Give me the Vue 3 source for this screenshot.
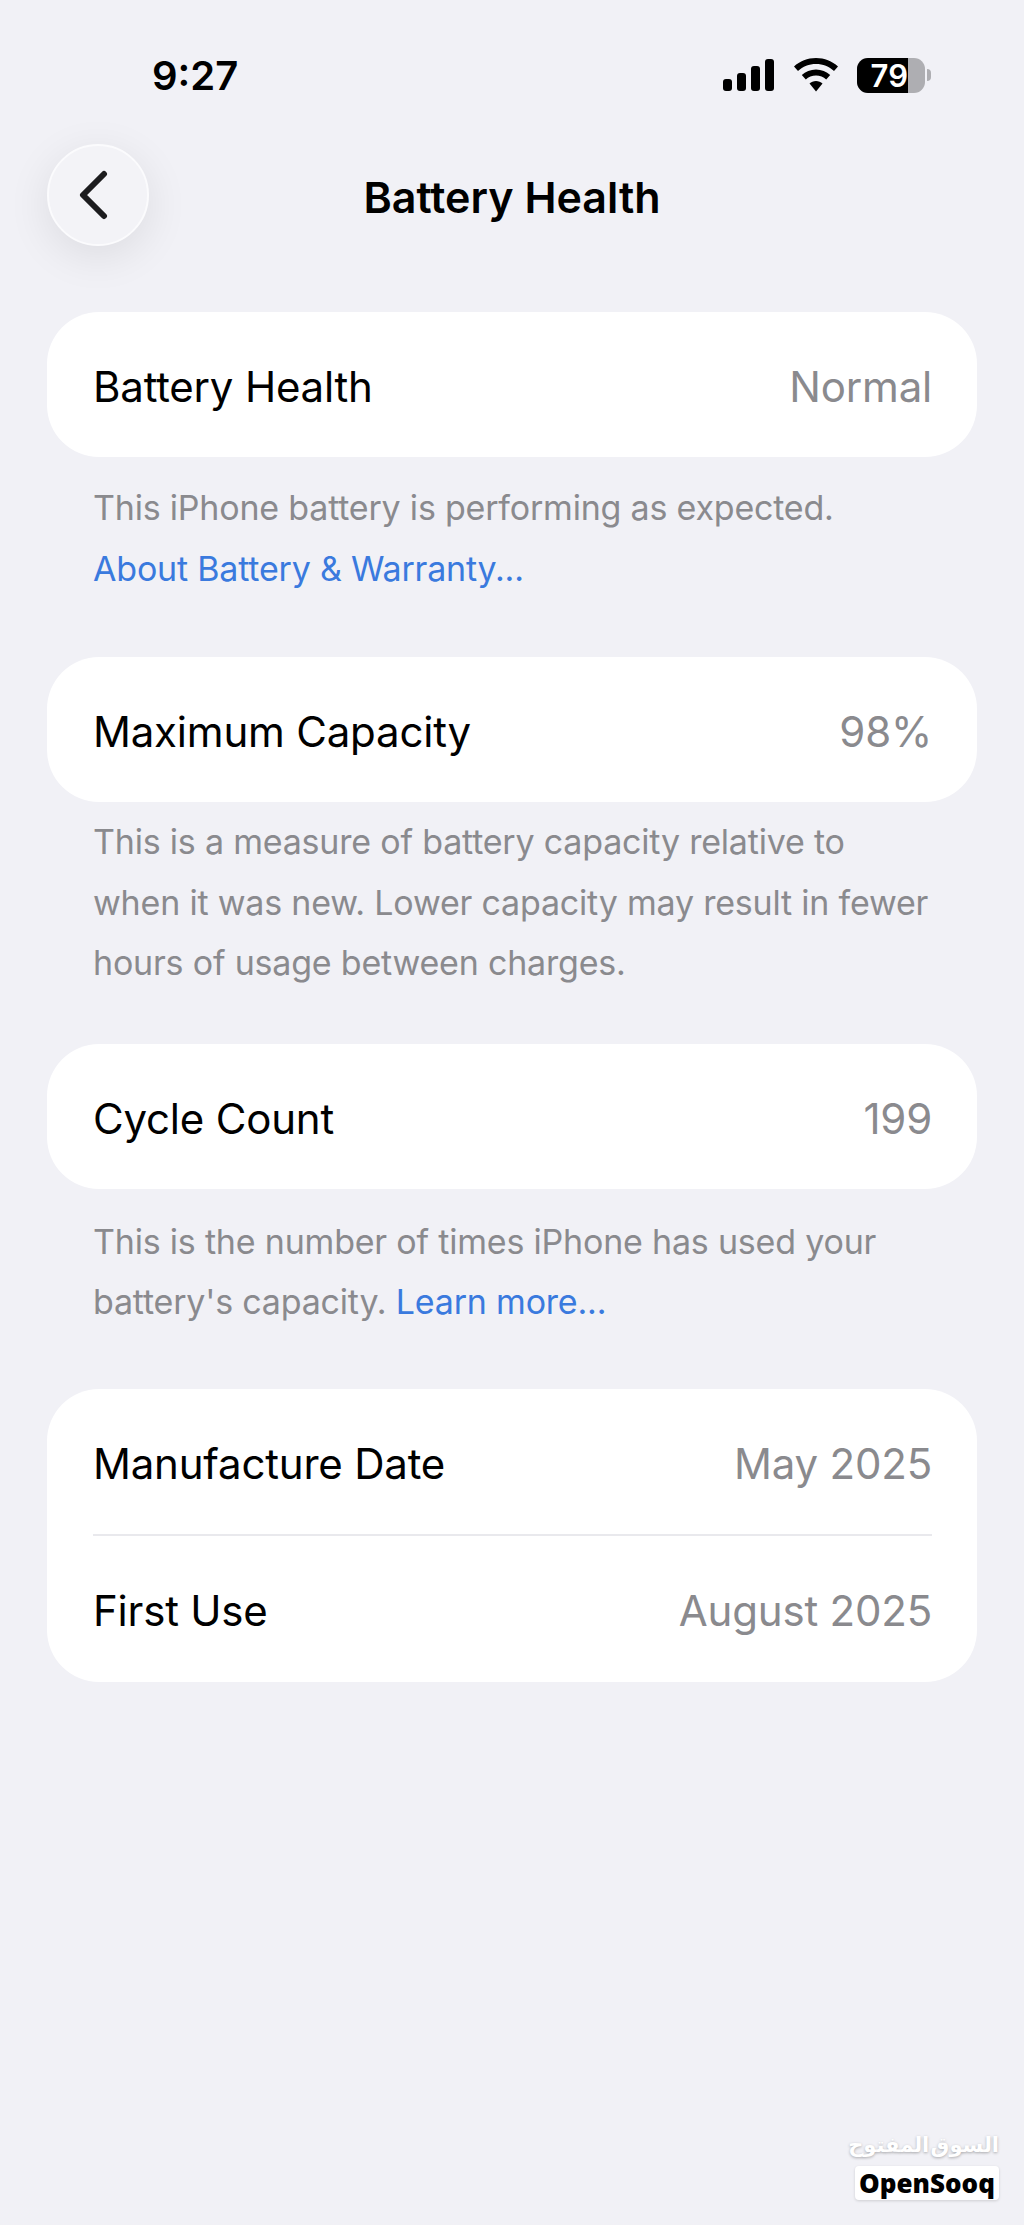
<template>
  <div class="screen">
    <div class="status-bar">
      <span class="time">9:27</span>
      <div class="status-icons">
        <svg class="signal" width="52" height="32" viewBox="0 0 52 32">
          <rect x="0" y="20" width="9" height="12" rx="3" />
          <rect x="14" y="14" width="9" height="18" rx="3" />
          <rect x="28" y="7" width="9" height="25" rx="3" />
          <rect x="42" y="0" width="9" height="32" rx="3" />
        </svg>
        <svg class="wifi" width="46" height="34" viewBox="0 0 46 34">
          <path d="M23 0C14.500 0 6.800 3.200 1 8.500L5 13C9.800 8.600 16.100 6 23 6C29.900 6 36.200 8.600 41 13L45 8.500C39.200 3.200 31.500 0 23 0Z" />
          <path d="M23 11.500C17.500 11.500 12.500 13.600 8.800 17L12.800 21.500C15.500 19.100 19.100 17.500 23 17.500C26.900 17.500 30.500 19.100 33.200 21.500L37.200 17C33.500 13.600 28.500 11.500 23 11.500Z" />
          <path d="M23 23C20.500 23 18.200 23.900 16.500 25.500L23 33.500L29.500 25.500C27.800 23.900 25.500 23 23 23Z" />
        </svg>
        <div class="battery">
          <div class="battery-body">
            <div class="battery-fill">79</div>
          </div>
          <div class="battery-nub"></div>
        </div>
      </div>
    </div>

    <div class="nav-bar">
      <button class="back-btn" type="button">
        <svg width="30" height="50" viewBox="0 0 30 50">
          <path d="M25 4L4 25L25 46" />
        </svg>
      </button>
      <h1 class="nav-title">Battery Health</h1>
    </div>

    <section class="group first">
      <div class="card">
        <div class="row"><span>Battery Health</span><span class="value">Normal</span></div>
      </div>
      <p class="note">
        This iPhone battery is performing as expected.<br />
        <a class="link">About Battery &amp; Warranty...</a>
      </p>
    </section>

    <section class="group second">
      <div class="card">
        <div class="row"><span>Maximum Capacity</span><span class="value">98%</span></div>
      </div>
      <p class="note">
        This is a measure of battery capacity relative to<br />
        when it was new. Lower capacity may result in fewer<br />
        hours of usage between charges.
      </p>
    </section>

    <section class="group third">
      <div class="card">
        <div class="row"><span>Cycle Count</span><span class="value">199</span></div>
      </div>
      <p class="note">
        This is the number of times iPhone has used your<br />
        battery's capacity. <a class="link">Learn more...</a>
      </p>
    </section>

    <section class="group">
      <div class="card">
        <div class="row"><span>Manufacture Date</span><span class="value">May 2025</span></div>
        <div class="divider"></div>
        <div class="row"><span>First Use</span><span class="value">August 2025</span></div>
      </div>
    </section>

    <div class="watermark">
      <div class="wm-arabic" dir="rtl">السوق المفتوح</div>
      <div class="wm-box">OpenSooq</div>
    </div>
  </div>
</template>

<script setup>
</script>

<style>
html,
body {
  margin: 0;
  background: #f1f1f6;
}
</style>

<style scoped>
.screen {
  position: relative;
  width: 1024px;
  height: 2225px;
  overflow: hidden;
  background: #f1f1f6;
  font-family: Inter, "Liberation Sans", sans-serif;
  color: #000;
}

.status-bar {
  display: flex;
  justify-content: space-between;
  align-items: center;
  height: 34px;
  padding: 58px 93px 0 152px;
}
.time {
  font-size: 40px;
  font-weight: 600;
}
.status-icons {
  display: flex;
  align-items: center;
  gap: 18px;
}
.status-icons svg {
  fill: #000;
  display: block;
}
.battery {
  display: flex;
  align-items: center;
  gap: 2px;
}
.battery-body {
  width: 68px;
  height: 35px;
  border-radius: 11px;
  background: #aeaeb2;
  overflow: hidden;
}
.battery-fill {
  width: 51px;
  height: 35px;
  background: #000;
  color: #fff;
  font-size: 31px;
  font-weight: 600;
  line-height: 35px;
  text-align: right;
}
.battery-nub {
  width: 4px;
  height: 12px;
  border-radius: 0 4px 4px 0;
  background: #aeaeb2;
}

.nav-bar {
  position: relative;
  display: flex;
  align-items: center;
  margin-top: 52px;
  height: 102px;
  padding-left: 47px;
}
.back-btn {
  width: 102px;
  height: 102px;
  padding: 0;
  border: 2px solid #fbfbfd;
  border-radius: 50%;
  background: #f3f3f7;
  box-shadow: 0 10px 44px rgba(0, 0, 0, 0.09);
  display: flex;
  align-items: center;
  justify-content: center;
}
.back-btn svg {
  fill: none;
  stroke: #1c1c1e;
  stroke-width: 6;
  stroke-linecap: round;
  stroke-linejoin: round;
  margin-right: 8px;
}
.nav-title {
  flex: 1;
  margin: 0 0 0 -102px;
  padding: 3px 47px 0 0;
  text-align: center;
  font-size: 43px;
  font-weight: 600;
}

.group {
  margin: 0 47px;
}
.group.first {
  margin-top: 66px;
}
.card {
  background: #fff;
  border-radius: 52px;
}
.row {
  display: flex;
  justify-content: space-between;
  align-items: center;
  box-sizing: border-box;
  height: 145px;
  padding: 4px 45px 0 46px;
  font-size: 42px;
  letter-spacing: -0.2px;
}
.divider + .row {
  height: 146px;
}
.value {
  color: #8a8a8e;
}
.divider {
  height: 2px;
  margin: 0 45px 0 46px;
  background: #e9e9ed;
}
.note {
  margin: 0;
  padding: 21px 47px 58px 46px;
  font-size: 34px;
  line-height: 60.5px;
  color: #8a8a8e;
  letter-spacing: -0.2px;
}
.second .note {
  padding-top: 10px;
  padding-bottom: 50px;
}
.third .note {
  padding-top: 23px;
  padding-bottom: 56px;
}
.link {
  color: #3a7ade;
}

.watermark {
  position: absolute;
  right: 25px;
  bottom: 25px;
  width: 144px;
}
.wm-arabic {
  font-family: "DejaVu Sans", sans-serif;
  font-size: 21px;
  font-weight: 700;
  line-height: 34px;
  word-spacing: -6px;
  color: #fff;
  text-align: center;
  white-space: nowrap;
  text-shadow: 0 1px 3px rgba(0, 0, 0, 0.3);
}
.wm-box {
  margin-top: 4px;
  height: 34px;
  border-radius: 4px;
  background: #fff;
  box-shadow: 0 1px 3px rgba(0, 0, 0, 0.15);
  color: #000;
  font-family: "Noto Sans", sans-serif;
  font-size: 26px;
  font-weight: 900;
  line-height: 34px;
  text-align: center;
}
</style>
